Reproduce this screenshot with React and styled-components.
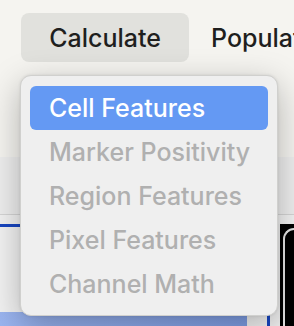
import React from 'react'
import styled, { createGlobalStyle } from 'styled-components'

const GlobalStyle = createGlobalStyle`
  html, body {
    margin: 0;
    padding: 0;
    background: #f5f4f0;
    overflow: hidden;
  }
  * {
    box-sizing: border-box;
  }
`

const Screen = styled.div`
  position: relative;
  width: 294px;
  height: 326px;
  overflow: hidden;
  display: flex;
  flex-direction: column;
  font-family: Inter, 'Liberation Sans', sans-serif;
`

const Toolbar = styled.div`
  height: 157px;
  flex-shrink: 0;
  display: flex;
  align-items: flex-start;
  padding: 13px 0 0 21px;
  background: #f5f4f0;
  white-space: nowrap;
  overflow: hidden;
`

const ToolButton = styled.div`
  height: 49px;
  min-width: ${(props) => (props.$active ? '168px' : 'auto')};
  padding: 0 22px;
  display: flex;
  align-items: center;
  justify-content: center;
  border-radius: 8px;
  font-size: 25px;
  font-weight: 450;
  color: #1f1f1e;
  background: ${(props) => (props.$active ? '#e1e1dd' : 'transparent')};
  flex-shrink: 0;
`

const SubBar = styled.div`
  height: 58px;
  flex-shrink: 0;
  background: #eeeeee;
  border-bottom: 1px solid #d5d5d5;
`

const Strip = styled.div`
  height: 9px;
  flex-shrink: 0;
  background: #f2f2f2;
`

const Content = styled.div`
  flex: 1;
  display: flex;
  background: #efefef;
`

const ViewPanel = styled.div`
  width: 270px;
  flex-shrink: 0;
  display: flex;
  flex-direction: column;
  justify-content: flex-end;
  border-top: 3px solid #1846c0;
  border-right: 3px solid #1846c0;
  background: #f2f2f2;
`

const ProgressBar = styled.div`
  width: 247px;
  height: 14px;
  background: linear-gradient(90deg, #9bb5f0, #7e9de4);
`

const Gutter = styled.div`
  width: 10px;
  flex-shrink: 0;
`

const DarkPanel = styled.div`
  flex: 1;
  background: #000;
  padding: 4px 0 0 3px;
`

const DarkFrame = styled.div`
  height: 100%;
  border: 2px solid #e6e6e6;
  border-right: none;
  border-bottom: none;
  border-radius: 12px 0 0 0;
`

const Menu = styled.div`
  position: absolute;
  left: 20px;
  top: 75px;
  width: 258px;
  padding: 10px 9px 9px;
  background: #efefef;
  border: 1px solid #d0d0ce;
  border-radius: 11px;
  box-shadow: 0 10px 34px rgba(0, 0, 0, 0.28), 0 0 3px rgba(0, 0, 0, 0.1);
  display: flex;
  flex-direction: column;
`

const MenuItem = styled.div`
  height: 44px;
  padding-left: 19px;
  display: flex;
  align-items: center;
  border-radius: 6px;
  font-size: 25px;
  font-weight: 450;
  white-space: nowrap;
  color: ${(props) => (props.$active ? '#ffffff' : '#b0b0b0')};
  background: ${(props) => (props.$active ? '#6499f3' : 'transparent')};
`

const items = [
  'Cell Features',
  'Marker Positivity',
  'Region Features',
  'Pixel Features',
  'Channel Math',
]

export default function App() {
  return (
    <Screen>
      <GlobalStyle />
      <Toolbar>
        <ToolButton $active>Calculate</ToolButton>
        <ToolButton>Population</ToolButton>
      </Toolbar>
      <SubBar />
      <Strip />
      <Content>
        <ViewPanel>
          <ProgressBar />
        </ViewPanel>
        <Gutter />
        <DarkPanel>
          <DarkFrame />
        </DarkPanel>
      </Content>
      <Menu>
        {items.map((label, i) => (
          <MenuItem key={label} $active={i === 0}>
            {label}
          </MenuItem>
        ))}
      </Menu>
    </Screen>
  )
}
